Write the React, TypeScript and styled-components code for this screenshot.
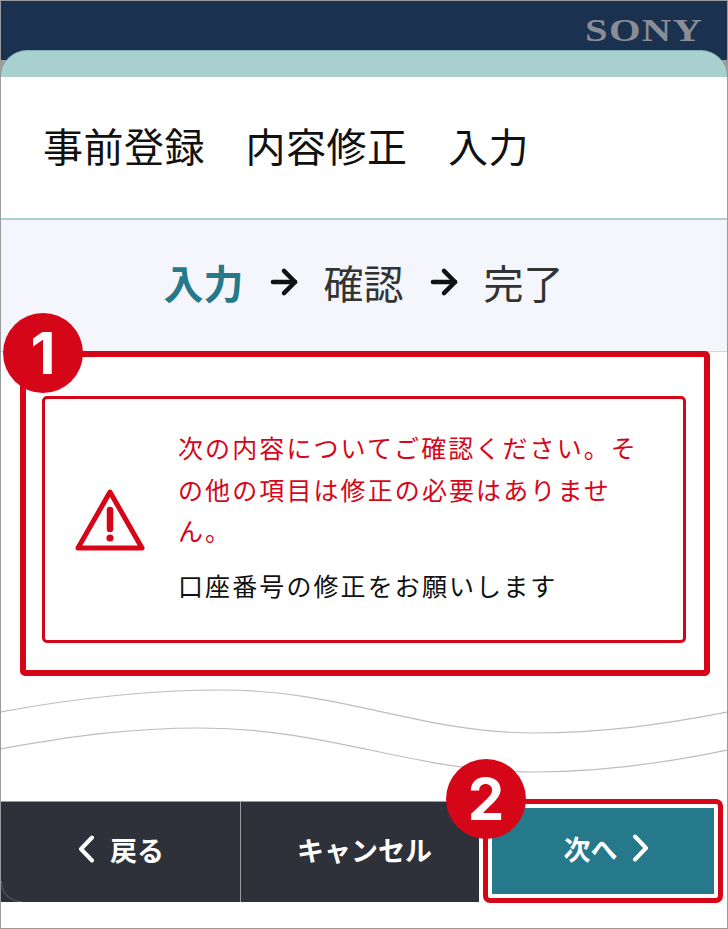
import styled, { createGlobalStyle } from "styled-components";
import { ArrowRight } from "lucide-react";

const RED = "#d60619";
const TEAL = "#26798a";
const DARK = "#2e3139";

const GlobalStyle = createGlobalStyle`
  html, body {
    margin: 0;
    padding: 0;
    background: #fff;
  }
  body {
    font-family: "Noto Sans CJK JP", "Liberation Sans", sans-serif;
  }
`;

function WarningIcon() {
  return (
    <svg width="70" height="64" viewBox="0 0 70 64" fill="none">
      <path
        d="M35 4 L67 60 H3 Z"
        stroke={RED}
        strokeWidth="5"
        strokeLinejoin="round"
      />
      <path d="M35 22 V41" stroke={RED} strokeWidth="6.5" strokeLinecap="round" />
      <circle cx="35" cy="50" r="3.6" fill={RED} />
    </svg>
  );
}

function Chevron({ dir }: { dir: "left" | "right" }) {
  return (
    <svg width="18" height="28" viewBox="0 0 18 28" fill="none">
      <path
        d={dir === "left" ? "M15 2.5 L4 14 L15 25.5" : "M3 2.5 L14 14 L3 25.5"}
        stroke="#fff"
        strokeWidth="4"
        strokeLinecap="round"
        strokeLinejoin="round"
      />
    </svg>
  );
}

function App() {
  return (
    <Frame>
      <GlobalStyle />
      <Header>
        <Logo>SONY</Logo>
      </Header>
      <CardTop>
        <CardTab />
      </CardTop>
      <TitleBlock>
        <h1>事前登録　内容修正　入力</h1>
      </TitleBlock>
      <Steps>
        <Step $active>入力</Step>
        <ArrowRight size={38} strokeWidth={2.8} color="#111" />
        <Step>確認</Step>
        <ArrowRight size={38} strokeWidth={2.8} color="#111" />
        <Step>完了</Step>
      </Steps>
      <Content>
        <MessageBox>
          <IconCell>
            <WarningIcon />
          </IconCell>
          <MessageText>
            <ErrorLine>
              次の内容についてご確認ください。その他の項目は修正の必要はありません。
            </ErrorLine>
            <NoteLine>口座番号の修正をお願いします</NoteLine>
          </MessageText>
        </MessageBox>
        <Waves viewBox="0 0 726 110" fill="none">
          <path d="M-1 23 C 70 10, 150 1, 222 1 C 340 1, 420 44, 533 44 C 600 44, 660 36, 727 23" />
          <path d="M-1 60 C 70 47, 130 39, 199 39 C 330 39, 410 83, 533 83 C 600 83, 660 75, 727 61" />
        </Waves>
      </Content>
      <Footer>
        <BackButton>
          <Chevron dir="left" />
          戻る
        </BackButton>
        <CancelButton>キャンセル</CancelButton>
        <NextCell>
          <NextButton>
            次へ
            <Chevron dir="right" />
          </NextButton>
        </NextCell>
      </Footer>
      <AlertHighlight />
      <NextHighlight />
      <AlertBadge>1</AlertBadge>
      <NextBadge>2</NextBadge>
    </Frame>
  );
}

const Frame = styled.div`
  position: relative;
  box-sizing: border-box;
  width: 728px;
  height: 929px;
  border: 1px solid #9a9a9a;
  background: #fff;
  overflow: hidden;
`;

const Header = styled.header`
  display: flex;
  justify-content: flex-end;
  align-items: flex-start;
  height: 49px;
  background: #1a3150;
`;

const Logo = styled.div`
  margin: 12px 24px 0 0;
  font-family: "Liberation Serif", serif;
  font-weight: 700;
  font-size: 31px;
  line-height: 36px;
  letter-spacing: 1px;
  color: #8b8d95;
  transform: scaleX(1.31);
  transform-origin: right center;
`;

const CardTop = styled.div`
  height: 27px;
  background: linear-gradient(#1a3150 10px, #9c9c9c 10px);
`;

const CardTab = styled.div`
  height: 27px;
  box-sizing: border-box;
  background: #a8d0cf;
  border-top: 1px solid #7fb0b4;
  border-radius: 26px 26px 0 0;
`;

const TitleBlock = styled.div`
  box-sizing: border-box;
  height: 143px;
  display: flex;
  align-items: center;
  padding: 0 0 6px 42px;
  border-bottom: 2px solid #a8d0cf;

  h1 {
    margin: 0;
    font-size: 40px;
    font-weight: 400;
    line-height: 1;
    color: #111;
    letter-spacing: 0.5px;
  }
`;

const Steps = styled.div`
  box-sizing: border-box;
  display: flex;
  align-items: center;
  justify-content: center;
  gap: 21px;
  height: 132px;
  padding: 0 1px 8px 0;
  background: #f4f6fb;
  border-bottom: 1px solid #cdd9dc;
`;

const Step = styled.span<{ $active?: boolean }>`
  font-size: 40px;
  font-weight: ${(p) => (p.$active ? 700 : 400)};
  color: ${(p) => (p.$active ? TEAL : "#333")};
  line-height: 1;
`;

const Content = styled.main`
  padding-top: 44px;
`;

const MessageBox = styled.section`
  display: flex;
  align-items: center;
  box-sizing: border-box;
  width: 644px;
  height: 247px;
  margin-left: 41px;
  padding-bottom: 6px;
  border: 3.5px solid ${RED};
  border-radius: 5px;
`;

const IconCell = styled.div`
  display: flex;
  flex: 0 0 auto;
  margin: 6px 33px 0 30px;
`;

const MessageText = styled.div`
  width: 470px;
  font-size: 25px;
  letter-spacing: 2.1px;
  line-height: 41.5px;
`;

const ErrorLine = styled.p`
  margin: 0 0 13px;
  color: ${RED};
`;

const NoteLine = styled.p`
  margin: 0;
  color: #111;
`;

const Waves = styled.svg`
  display: block;
  width: 726px;
  height: 110px;
  margin-top: 46px;

  path {
    stroke: #bdbdbd;
    stroke-width: 1.2;
  }
`;

const Footer = styled.footer`
  display: flex;
  height: 101px;
  margin-top: 2px;
`;

const FooterButton = styled.button`
  position: relative;
  box-sizing: border-box;
  display: flex;
  align-items: center;
  justify-content: center;
  gap: 15px;
  padding: 0 0 6px;
  background: ${DARK};
  border: 0;
  border-top: 1px solid #9a9a9a;
  border-right: 1px solid #9a9ca2;
  font: 700 27px "Noto Sans CJK JP", sans-serif;
  color: #fff;
`;

const BackButton = styled(FooterButton)`
  width: 240px;

  &::after {
    content: "";
    position: absolute;
    left: 0;
    bottom: 0;
    width: 20px;
    height: 20px;
    border-left: 1px solid #56585d;
    border-bottom: 1px solid #56585d;
    border-bottom-left-radius: 20px;
  }
`;

const CancelButton = styled(FooterButton)`
  width: 238px;
  padding-left: 9px;
  border-right: 0;
`;

const NextCell = styled.div`
  flex: 1;
  padding: 7px 13px 8px 13px;
`;

const NextButton = styled.button`
  display: flex;
  align-items: center;
  justify-content: center;
  gap: 14px;
  width: 100%;
  height: 100%;
  padding: 0 0 6px 7px;
  background: ${TEAL};
  border: 0;
  font: 700 27px "Noto Sans CJK JP", sans-serif;
  color: #fff;
`;

const AlertHighlight = styled.div`
  position: absolute;
  left: 19px;
  top: 350px;
  width: 690px;
  height: 325px;
  box-sizing: border-box;
  border: 6px solid ${RED};
  border-radius: 5px;
`;

const NextHighlight = styled.div`
  position: absolute;
  left: 482px;
  top: 798px;
  width: 240px;
  height: 104px;
  box-sizing: border-box;
  border: 5.5px solid ${RED};
  border-radius: 7px;
  box-shadow: 0 0 0 4px #fff;
`;

const Badge = styled.div`
  position: absolute;
  display: flex;
  align-items: center;
  justify-content: center;
  width: 80px;
  height: 80px;
  border-radius: 50%;
  background: ${RED};
  color: #fff;
  font: 700 58px/1 Inter, "Liberation Sans", sans-serif;
`;

const AlertBadge = styled(Badge)`
  left: 2px;
  top: 312px;
`;

const NextBadge = styled(Badge)`
  left: 445px;
  top: 758px;
`;

export default App;
